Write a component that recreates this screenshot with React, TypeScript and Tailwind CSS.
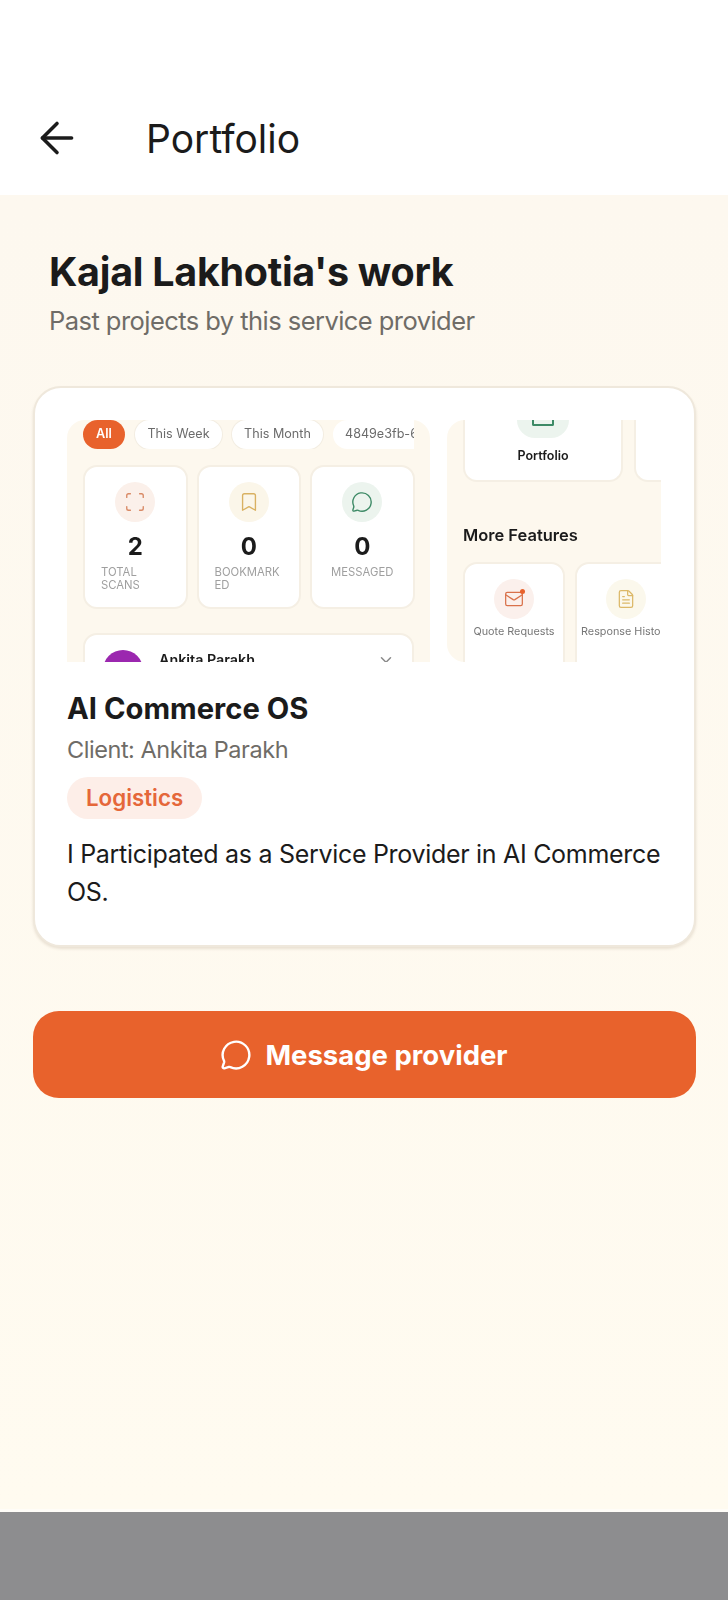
import { ArrowLeft, Bookmark, ChevronDown, FileText, Mail, MessageCircle, Scan } from "lucide-react";

function FilterPill({ label, active, width }: { label: string; active?: boolean; width: string }) {
    return (
        <div className={`${width} h-[29px] shrink-0 rounded-full flex items-center justify-center text-[12.6px] whitespace-nowrap overflow-hidden ${active ? "bg-[#e8622c] text-white font-semibold" : "bg-white text-[#6b6b6b] shadow-[0_0_0_1px_#f3ede2]"}`}>
            {label}
        </div>
    );
}

function StatCard({ icon, circle, value, label, center }: { icon: React.ReactNode; circle: string; value: string; label: string; center?: boolean }) {
    return (
        <div className="w-[104.5px] h-[144px] shrink-0 bg-white rounded-[14px] border-2 border-[#f5efe4] flex flex-col items-center pt-[15px]">
            <div className={`w-[40px] h-[40px] rounded-full flex items-center justify-center ${circle}`}>{icon}</div>
            <div className="text-[24px] leading-[28px] font-bold text-[#1b1b1b] mt-[11px]">{value}</div>
            <div className={`w-full px-[16px] text-[11.3px] leading-[13px] text-[#9f9f9f] mt-[5px] [overflow-wrap:anywhere] ${center ? "text-center px-0" : ""}`}>{label}</div>
        </div>
    );
}

function FeatureCard({ icon, circle, label, width }: { icon: React.ReactNode; circle: string; label: string; width: string }) {
    return (
        <div className={`${width} h-[120px] shrink-0 bg-white rounded-t-[14px] border-2 border-[#f5efe4] flex flex-col items-center pt-[15px]`}>
            <div className={`w-[40px] h-[40px] rounded-full flex items-center justify-center ${circle}`}>{icon}</div>
            <div className="text-[10.8px] leading-[14px] text-[#777] mt-[6px] whitespace-nowrap">{label}</div>
        </div>
    );
}

export default function App() {
    return (
        <div className="w-[728px] h-[1600px] flex flex-col bg-white font-['Inter',sans-serif] overflow-hidden">
            <header className="h-[195px] shrink-0 bg-white flex items-end pb-[30px] pl-[32px] gap-[64px]">
                <ArrowLeft size={50} strokeWidth={1.7} className="text-[#1b1b1b] mb-[2px]" />
                <h1 className="text-[39px] leading-[53px] text-[#1b1b1b]">Portfolio</h1>
            </header>

            <main className="flex-1 bg-linear-to-b from-[#fdf8ef] to-[#fffbf0] pl-[32.5px] pt-[51px] border-b-[3px] border-[#fffdf8]">
                <div className="pl-[16.5px]">
                    <h2 className="text-[39.5px] leading-[52px] font-bold text-[#1b1b1b] tracking-[-0.3px]">Kajal Lakhotia's work</h2>
                    <p className="text-[25.5px] leading-[36px] text-[#6f6c67] mt-[5px] tracking-[-0.55px]">Past projects by this service provider</p>
                </div>

                <section className="mt-[47px] w-[663px] h-[561px] bg-white rounded-[28px] border-2 border-[#efe8dc] shadow-[0_2px_3px_#e9e0d2] pt-[32px]">
                    <div className="flex gap-[17px] pl-[32.5px]">
                        <div className="w-[363px] h-[242px] shrink-0 bg-[#fdf8ee] rounded-t-[18px] overflow-hidden px-[16px] blur-[0.3px]">
                            <div className="flex gap-[10px] overflow-hidden">
                                <FilterPill label="All" active width="w-[42px]" />
                                <FilterPill label="This Week" width="w-[87px]" />
                                <FilterPill label="This Month" width="w-[91px]" />
                                <div className="w-[84px] h-[29px] shrink-0 rounded-l-full bg-white text-[#6b6b6b] text-[12.6px] pl-[12px] flex items-center overflow-hidden whitespace-nowrap">4849e3fb-6d2a</div>
                            </div>
                            <div className="flex gap-[9px] mt-[16px]">
                                <StatCard icon={<Scan size={22} strokeWidth={1.5} className="text-[#d98a66]" />} circle="bg-[#fbf0ea]" value="2" label="TOTAL SCANS" />
                                <StatCard icon={<Bookmark size={22} strokeWidth={1.5} className="text-[#d9b162]" />} circle="bg-[#fbf6e9]" value="0" label="BOOKMARKED" />
                                <StatCard icon={<MessageCircle size={22} strokeWidth={1.5} className="text-[#3d8a66]" />} circle="bg-[#ecf4ee]" value="0" label="MESSAGED" center />
                            </div>
                            <div className="w-[331px] h-[60px] mt-[24px] bg-white rounded-t-[14px] border-2 border-[#f5efe4] flex items-start pl-[18px] pr-[17px] pt-[15px]">
                                <div className="w-[40px] h-[40px] rounded-full bg-[#9b27af] shrink-0" />
                                <div className="ml-[16px] text-[14.3px] leading-[16px] font-semibold text-[#1b1b1b] flex-1 mt-[2px]">Ankita Parakh</div>
                                <ChevronDown size={18} className="text-[#8a8a8a] mt-[1px]" />
                            </div>
                        </div>

                        <div className="w-[214px] h-[242px] shrink-0 bg-[#fdf8ee] rounded-l-[18px] overflow-hidden pl-[16px] blur-[0.3px]">
                            <div className="flex gap-[11px] h-[62px]">
                                <div className="w-[160px] shrink-0 bg-white rounded-b-[14px] border-2 border-t-0 border-[#f5efe4] flex flex-col items-center">
                                    <div className="w-[52px] h-[18px] rounded-b-full bg-[#ecf4ee] flex justify-center overflow-hidden">
                                        <div className="w-[22px] h-[6px] border-2 border-t-0 border-[#3d8a66] rounded-b-[2px]" />
                                    </div>
                                    <div className="text-[12.5px] leading-[16px] font-semibold text-[#1b1b1b] mt-[10px]">Portfolio</div>
                                </div>
                                <div className="w-[60px] shrink-0 bg-white rounded-bl-[14px] border-2 border-t-0 border-r-0 border-[#f5efe4]" />
                            </div>
                            <div className="text-[16.5px] leading-[20px] font-semibold text-[#1b1b1b] mt-[43px] whitespace-nowrap">More Features</div>
                            <div className="flex gap-[10px] mt-[17px]">
                                <FeatureCard
                                    width="w-[102px]"
                                    circle="bg-[#fbf0ec] relative"
                                    label="Quote Requests"
                                    icon={
                                        <>
                                            <Mail size={20} strokeWidth={1.5} className="text-[#d9714a]" />
                                            <span className="absolute top-[10px] right-[9px] w-[5px] h-[5px] rounded-full bg-[#e8622c]" />
                                        </>
                                    }
                                />
                                <FeatureCard
                                    width="w-[102px]"
                                    circle="bg-[#fbf8ec]"
                                    label="Response History"
                                    icon={<FileText size={20} strokeWidth={1.5} className="text-[#dcb868]" />}
                                />
                            </div>
                        </div>
                    </div>

                    <div className="pl-[32.5px] pr-[16px] pt-[28px]">
                        <h3 className="text-[29.2px] leading-[38px] font-bold text-[#1b1b1b]">AI Commerce OS</h3>
                        <p className="text-[23.5px] leading-[32px] text-[#6f6c67] mt-[6px] tracking-[-0.45px]">Client: Ankita Parakh</p>
                        <span className="inline-flex items-center h-[42px] px-[19px] mt-[11px] rounded-full bg-[#fdeee8] text-[22.3px] font-semibold text-[#e5673a]">Logistics</span>
                        <p className="text-[25px] leading-[38px] text-[#1b1b1b] mt-[16px] tracking-[-0.3px]">I Participated as a Service Provider in AI Commerce OS.</p>
                    </div>
                </section>

                <button className="mt-[64px] w-[663px] h-[87px] rounded-[26px] bg-[#e8622c] flex items-center justify-center gap-[13px] pt-[2px] text-white text-[27.5px] font-bold">
                    <MessageCircle size={32} strokeWidth={1.8} className="-mt-[2px]" />
                    Message provider
                </button>
            </main>

            <div className="h-[88px] shrink-0 bg-[#8d8d8f]" />
        </div>
    );
}
